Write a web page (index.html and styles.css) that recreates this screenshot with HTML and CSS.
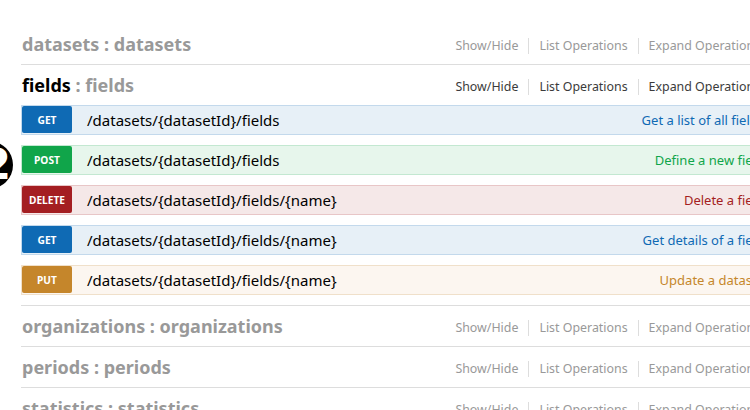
FILE: index.html
```html
<!DOCTYPE html>
<html lang="en">
<head>
<meta charset="utf-8">
<title>API Resources</title>
<link rel="stylesheet" href="styles.css">
</head>
<body>
<div class="page">
  <span class="marker">2</span>
  <ul class="resources">
    <li class="resource">
      <div class="res-heading">
        <h2><a href="#">datasets : datasets</a></h2>
        <ul class="options">
          <li><a href="#">Show/Hide</a></li>
          <li><a href="#">List Operations</a></li>
          <li class="last"><a href="#">Expand Operations</a></li>
        </ul>
      </div>
    </li>
    <li class="resource active">
      <div class="res-heading">
        <h2><a href="#" class="name">fields</a> : fields</h2>
        <ul class="options">
          <li><a href="#">Show/Hide</a></li>
          <li><a href="#">List Operations</a></li>
          <li class="last"><a href="#">Expand Operations</a></li>
        </ul>
      </div>
      <ul class="operations">
        <li class="op get">
          <span class="method">GET</span>
          <span class="path">/datasets/{datasetId}/fields</span>
          <span class="summary">Get a list of all fields</span>
        </li>
        <li class="op post">
          <span class="method">POST</span>
          <span class="path">/datasets/{datasetId}/fields</span>
          <span class="summary">Define a new field</span>
        </li>
        <li class="op delete">
          <span class="method">DELETE</span>
          <span class="path">/datasets/{datasetId}/fields/{name}</span>
          <span class="summary">Delete a field</span>
        </li>
        <li class="op get">
          <span class="method">GET</span>
          <span class="path">/datasets/{datasetId}/fields/{name}</span>
          <span class="summary">Get details of a field</span>
        </li>
        <li class="op put">
          <span class="method">PUT</span>
          <span class="path">/datasets/{datasetId}/fields/{name}</span>
          <span class="summary">Update a dataset</span>
        </li>
      </ul>
    </li>
    <li class="resource">
      <div class="res-heading">
        <h2><a href="#">organizations : organizations</a></h2>
        <ul class="options">
          <li><a href="#">Show/Hide</a></li>
          <li><a href="#">List Operations</a></li>
          <li class="last"><a href="#">Expand Operations</a></li>
        </ul>
      </div>
    </li>
    <li class="resource">
      <div class="res-heading">
        <h2><a href="#">periods : periods</a></h2>
        <ul class="options">
          <li><a href="#">Show/Hide</a></li>
          <li><a href="#">List Operations</a></li>
          <li class="last"><a href="#">Expand Operations</a></li>
        </ul>
      </div>
    </li>
    <li class="resource">
      <div class="res-heading">
        <h2><a href="#">statistics : statistics</a></h2>
        <ul class="options">
          <li><a href="#">Show/Hide</a></li>
          <li><a href="#">List Operations</a></li>
          <li class="last"><a href="#">Expand Operations</a></li>
        </ul>
      </div>
    </li>
  </ul>
</div>
</body>
</html>
```

FILE: styles.css
```css
html, body {
  margin: 0;
  padding: 0;
  overflow: hidden;
  background: #fff;
}
body {
  font-family: "Noto Sans", "Open Sans", "DejaVu Sans", sans-serif;
  color: #000;
}
a {
  text-decoration: none;
}
ul {
  list-style: none;
  margin: 0;
  padding: 0;
}
.page {
  position: relative;
  padding: 24px 0 0 21px;
  width: 754px;
}
.marker {
  position: absolute;
  left: -35px;
  top: 141px;
  width: 46px;
  height: 48px;
  padding-right: 2px;
  border-radius: 50%;
  background: #000;
  color: #fff;
  font: bold 42px/48px "DejaVu Sans", sans-serif;
  text-align: right;
  z-index: 2;
}
.resource {
  border-bottom: 1px solid #ddd;
}
.res-heading {
  display: flex;
  align-items: center;
  justify-content: space-between;
  height: 40px;
}
.res-heading h2 {
  margin: 0;
  padding-left: 1px;
  font-size: 18px;
  font-weight: bold;
  color: #999;
}
.res-heading h2 a {
  color: #999;
}
.resource.active h2 a.name {
  color: #000;
}
.options {
  display: flex;
  align-items: center;
  margin-right: 15px;
  padding-top: 4px;
}
.options li {
  padding: 0 10px 0 10px;
  border-right: 1px solid #ddd;
  font-size: 12.4px;
  line-height: 16px;
}
.options li.last {
  border-right: 0;
  padding-right: 0;
}
.options a {
  color: #999;
}
.resource.active .options a {
  color: #3b3b3b;
}
.op {
  display: flex;
  align-items: flex-start;
  height: 28px;
  margin-bottom: 10px;
  border: 1px solid;
}
.method {
  flex: none;
  width: 50px;
  height: 27px;
  line-height: 28px;
  border-radius: 2px;
  color: #fff;
  font-size: 10.2px;
  font-weight: bold;
  text-align: center;
}
.path {
  padding-left: 15px;
  font-size: 15px;
  line-height: 28px;
  color: #000;
}
.summary {
  margin-left: auto;
  padding-right: 10px;
  font-size: 13px;
  line-height: 28px;
}
.op.get { background: #e7f0f7; border-color: #c3d9ec; }
.op.get .method { background: #0f6ab4; }
.op.get .summary { color: #0f6ab4; }
.op.post { background: #e7f6ec; border-color: #c3e8d1; }
.op.post .method { background: #10a54a; }
.op.post .summary { color: #10a54a; }
.op.delete { background: #f5e8e8; border-color: #e8c6c7; }
.op.delete .method { background: #a41e22; }
.op.delete .summary { color: #a41e22; }
.op.put { background: #fcf6f0; border-color: #f0e0ca; }
.op.put .method { background: #c5862b; }
.op.put .summary { color: #c5862b; }
```
